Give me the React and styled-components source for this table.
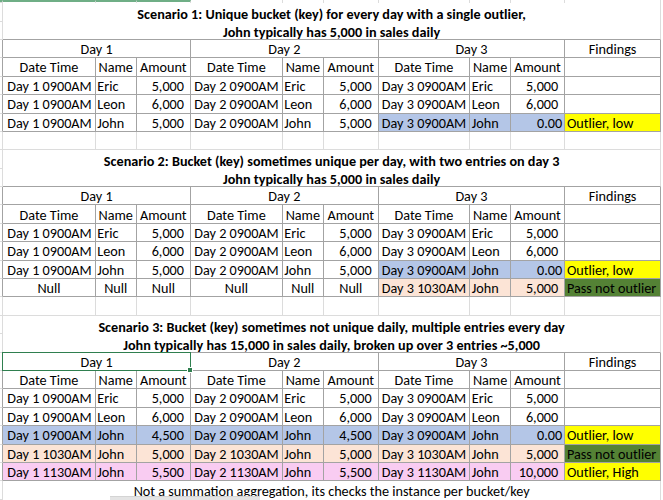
import React from 'react';
import styled, { createGlobalStyle, css } from 'styled-components';

const LINE = '#a3a3a3';
const GRID = '#dcdcdc';

const TONES = {
  blue: '#b4c6e7',
  peach: '#fce4d6',
  pink: '#f9ccf2',
  yellow: '#ffff00',
  green: '#548235',
};

const GlobalStyle = createGlobalStyle`
  html, body {
    margin: 0;
    padding: 0;
    background: #ffffff;
  }
  body {
    font-family: Carlito, Lato, 'Liberation Sans', sans-serif;
    color: #000000;
  }
`;

const Page = styled.div`
  position: relative;
  width: 663px;
  height: 500px;
  overflow: hidden;
  background: #ffffff;
`;

const Sheet = styled.div`
  display: grid;
  grid-template-columns: 3.3px 92.4px 41px 54.3px 91.7px 41.3px 54.7px 91.6px 40.7px 54.3px 95.7px;
  grid-template-rows: 3.2px;
  grid-auto-rows: 18.4px;
  width: 661px;
  font-size: 14.2px;
`;

const justify = { left: 'flex-start', center: 'center', right: 'flex-end' };

const Cell = styled.div`
  position: relative;
  box-sizing: border-box;
  display: flex;
  align-items: center;
  justify-content: ${(p) => justify[p.$align || 'left']};
  grid-column: span ${(p) => p.$span || 1};
  padding: 1px ${(p) => p.$right || 0}px 0 ${(p) => p.$left || 0}px;
  background: ${(p) => p.$bg || 'transparent'};
  border-right: 1px solid ${LINE};
  border-bottom: 1px solid ${LINE};
  white-space: nowrap;
  line-height: 1;

  ${(p) =>
    p.$selected &&
    css`
      &::after {
        content: '';
        position: absolute;
        left: -1px;
        top: -1px;
        right: -1px;
        bottom: -1px;
        border: 1.5px solid #2f7f4f;
        pointer-events: none;
      }
      &::before {
        content: '';
        position: absolute;
        right: -3px;
        bottom: -3px;
        width: 4px;
        height: 4px;
        background: #2f7f4f;
        border: 1px solid #ffffff;
        z-index: 2;
      }
    `}
`;

const Gutter = styled.div`
  box-sizing: border-box;
  grid-column: 1;
  border-right: 1px solid ${(p) => (p.$table ? LINE : GRID)};
  border-bottom: 1px solid ${GRID};
  ${(p) => p.$flag && css`border-top: 2px solid #6fae86;`}
`;

const TopCell = styled.div`
  box-sizing: border-box;
  border-right: 1px solid ${GRID};
  ${(p) => p.$flag && css`border-top: 2px solid #6fae86;`}
`;

const Title = styled.div`
  box-sizing: border-box;
  grid-column: span 10;
  grid-row: span 2;
  display: flex;
  flex-direction: column;
  align-items: center;
  padding-top: 2px;
  font-weight: 700;
  line-height: 18px;
  white-space: nowrap;
  border-right: 1px solid ${GRID};
  border-bottom: 1px solid ${LINE};
`;

const Blank = styled.div`
  box-sizing: border-box;
  border-right: 1px solid ${GRID};
  border-bottom: 1px solid ${GRID};
`;

const Note = styled.div`
  box-sizing: border-box;
  grid-column: span 10;
  display: flex;
  align-items: center;
  justify-content: center;
  padding-top: 1px;
  white-space: nowrap;
  line-height: 1;
  border-right: 1px solid ${GRID};
`;

const ScrollNub = styled.div`
  position: absolute;
  left: 110px;
  bottom: 0;
  width: 150px;
  height: 3.5px;
  background: #e4e4e4;
  border-top: 1px solid #d4d4d4;
`;

const e = (time, name, amount, tint) => ({ time, name, amount, tint });

const scenarios = [
  {
    title: [
      'Scenario 1: Unique bucket (key) for every day with a single outlier,',
      'John typically has 5,000 in sales daily',
    ],
    rows: [
      { days: [e('Day 1 0900AM', 'Eric', '5,000'), e('Day 2 0900AM', 'Eric', '5,000'), e('Day 3 0900AM', 'Eric', '5,000')] },
      { days: [e('Day 1 0900AM', 'Leon', '6,000'), e('Day 2 0900AM', 'Leon', '6,000'), e('Day 3 0900AM', 'Leon', '6,000')] },
      {
        days: [e('Day 1 0900AM', 'John', '5,000'), e('Day 2 0900AM', 'John', '5,000'), e('Day 3 0900AM', 'John', '0.00', 'blue')],
        finding: ['Outlier, low', 'yellow'],
      },
    ],
  },
  {
    title: [
      'Scenario 2: Bucket (key) sometimes unique per day, with two entries on day 3',
      'John typically has 5,000 in sales daily',
    ],
    rows: [
      { days: [e('Day 1 0900AM', 'Eric', '5,000'), e('Day 2 0900AM', 'Eric', '5,000'), e('Day 3 0900AM', 'Eric', '5,000')] },
      { days: [e('Day 1 0900AM', 'Leon', '6,000'), e('Day 2 0900AM', 'Leon', '6,000'), e('Day 3 0900AM', 'Leon', '6,000')] },
      {
        days: [e('Day 1 0900AM', 'John', '5,000'), e('Day 2 0900AM', 'John', '5,000'), e('Day 3 0900AM', 'John', '0.00', 'blue')],
        finding: ['Outlier, low', 'yellow'],
      },
      {
        days: [e('Null', 'Null', 'Null'), e('Null', 'Null', 'Null'), e('Day 3 1030AM', 'John', '5,000', 'peach')],
        finding: ['Pass not outlier', 'green'],
      },
    ],
  },
  {
    title: [
      'Scenario 3: Bucket (key) sometimes not unique daily, multiple entries every day',
      'John typically has 15,000 in sales daily, broken up over 3 entries ~5,000',
    ],
    selected: true,
    rows: [
      { days: [e('Day 1 0900AM', 'Eric', '5,000'), e('Day 2 0900AM', 'Eric', '5,000'), e('Day 3 0900AM', 'Eric', '5,000')] },
      { days: [e('Day 1 0900AM', 'Leon', '6,000'), e('Day 2 0900AM', 'Leon', '6,000'), e('Day 3 0900AM', 'Leon', '6,000')] },
      {
        days: [e('Day 1 0900AM', 'John', '4,500', 'blue'), e('Day 2 0900AM', 'John', '4,500', 'blue'), e('Day 3 0900AM', 'John', '0.00', 'blue')],
        finding: ['Outlier, low', 'yellow'],
      },
      {
        days: [e('Day 1 1030AM', 'John', '5,000', 'peach'), e('Day 2 1030AM', 'John', '5,000', 'peach'), e('Day 3 1030AM', 'John', '5,000', 'peach')],
        finding: ['Pass not outlier', 'green'],
      },
      {
        days: [e('Day 1 1130AM', 'John', '5,500', 'pink'), e('Day 2 1130AM', 'John', '5,500', 'pink'), e('Day 3 1130AM', 'John', '10,000', 'pink')],
        finding: ['Outlier, High', 'yellow'],
      },
    ],
  },
];

const BlankRow = () => (
  <>
    <Gutter />
    {Array.from({ length: 10 }, (_, i) => (
      <Blank key={i} />
    ))}
  </>
);

const DayEntry = ({ entry }) => {
  const bg = entry.tint && TONES[entry.tint];
  if (entry.time === 'Null') {
    return (
      <>
        <Cell $align="center">Null</Cell>
        <Cell $align="center">Null</Cell>
        <Cell $align="center">Null</Cell>
      </>
    );
  }
  return (
    <>
      <Cell $align="right" $right={3} $bg={bg}>{entry.time}</Cell>
      <Cell $left={1.6} $bg={bg}>{entry.name}</Cell>
      <Cell $align="right" $right={entry.amount.includes(',') ? 6 : 2} $bg={bg}>
        {entry.amount}
      </Cell>
    </>
  );
};

const Scenario = ({ data }) => (
  <>
    <Gutter />
    <Title>
      <span>{data.title[0]}</span>
      <span>{data.title[1]}</span>
    </Title>
    <Gutter />

    <Gutter $table />
    {['Day 1', 'Day 2', 'Day 3'].map((day, i) => (
      <Cell key={day} $span={3} $align="center" $selected={data.selected && i === 0}>
        {day}
      </Cell>
    ))}
    <Cell $align="center">Findings</Cell>

    <Gutter $table />
    {[0, 1, 2].map((i) => (
      <React.Fragment key={i}>
        <Cell $align="center">Date Time</Cell>
        <Cell $align="center">Name</Cell>
        <Cell $align="center">Amount</Cell>
      </React.Fragment>
    ))}
    <Cell />

    {data.rows.map((row, r) => (
      <React.Fragment key={r}>
        <Gutter $table />
        {row.days.map((entry, i) => (
          <DayEntry key={i} entry={entry} />
        ))}
        <Cell $left={1.7} $bg={row.finding && TONES[row.finding[1]]}>
          {row.finding ? row.finding[0] : ''}
        </Cell>
      </React.Fragment>
    ))}
  </>
);

const App = () => (
  <>
    <GlobalStyle />
    <Page>
      <Sheet>
        <Gutter $flag />
        <TopCell $flag />
        <TopCell $flag />
        <TopCell $flag />
        {Array.from({ length: 7 }, (_, i) => (
          <TopCell key={i} />
        ))}

        <Scenario data={scenarios[0]} />
        <BlankRow />
        <Scenario data={scenarios[1]} />
        <BlankRow />
        <Scenario data={scenarios[2]} />

        <Gutter />
        <Note>Not a summation aggregation, its checks the instance per bucket/key</Note>
      </Sheet>
      <ScrollNub />
    </Page>
  </>
);

export default App;
